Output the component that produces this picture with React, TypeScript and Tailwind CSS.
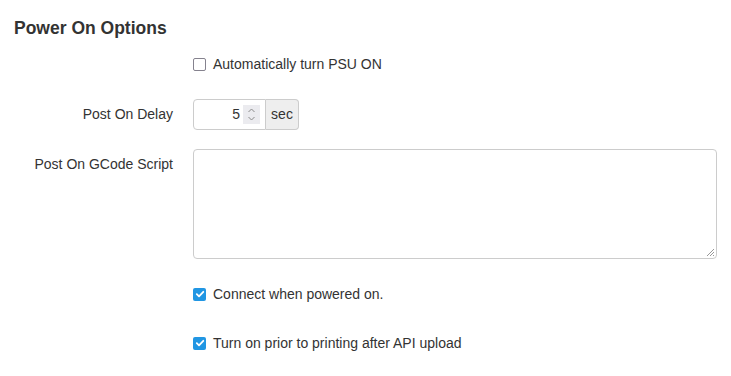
import React from "react";

function Check({ checked }: { checked: boolean }) {
  if (checked) {
    return (
      <span className="flex h-[13px] w-[13px] shrink-0 items-center justify-center rounded-[2px] bg-[#2196e3]">
        <svg width="10" height="10" viewBox="0 0 10 10">
          <path d="M1.8 5.2 L4 7.3 L8.3 2.8" fill="none" stroke="#fff" strokeWidth="1.8" strokeLinecap="round" strokeLinejoin="round" />
        </svg>
      </span>
    );
  }
  return <span className="h-[13px] w-[13px] shrink-0 rounded-[2px] border-[1.5px] border-[#85828e] bg-white" />;
}

export default function App() {
  return (
    <div
      className="min-h-[376px] w-[731px] bg-white text-[14px] text-[#333]"
      style={{ fontFamily: '"Liberation Sans", Arial, sans-serif' }}
    >
      <h3 className="pl-[14px] pt-[16px] text-[17.5px] font-bold leading-[24px] text-[#333]">Power On Options</h3>

      <div className="mt-[16px] flex items-center gap-[7px] pl-[193px]">
        <Check checked={false} />
        <span className="leading-[16px]">Automatically turn PSU ON</span>
      </div>

      <div className="mt-[27px] flex items-center">
        <div className="w-[173px] text-right">Post On Delay</div>
        <div className="ml-[20px] flex h-[31px]">
          <div className="relative flex w-[73px] items-center justify-end rounded-l-[4px] border border-[#ccc] bg-white pr-[25px]">
            <span>5</span>
            <span className="absolute right-[5px] top-[5px] flex h-[19px] w-[17px] flex-col items-center justify-center bg-[#ebebef]">
              <svg width="9" height="15" viewBox="0 0 9 15">
                <path d="M1.5 5 L4.5 2 L7.5 5" fill="none" stroke="#8a8a8a" strokeWidth="1" />
                <path d="M1.5 10 L4.5 13 L7.5 10" fill="none" stroke="#8a8a8a" strokeWidth="1" />
              </svg>
            </span>
          </div>
          <div className="flex w-[33px] items-center justify-center rounded-r-[4px] border border-l-0 border-[#ccc] bg-[#eee]">
            sec
          </div>
        </div>
      </div>

      <div className="mt-[19px] flex items-start">
        <div className="w-[173px] pt-[5px] text-right">Post On GCode Script</div>
        <div className="relative ml-[20px] h-[110px] w-[524px] rounded-[4px] border border-[#ccc] bg-white">
          <svg className="absolute bottom-[1px] right-[1px]" width="10" height="10" viewBox="0 0 10 10">
            <path d="M9 2 L2 9 M9 5 L5 9 M9 8 L8 9" stroke="#999" strokeWidth="1" />
          </svg>
        </div>
      </div>

      <div className="mt-[27px] flex items-center gap-[7px] pl-[193px]">
        <Check checked={true} />
        <span className="leading-[16px]">Connect when powered on.</span>
      </div>

      <div className="mt-[33px] flex items-center gap-[7px] pl-[193px]">
        <Check checked={true} />
        <span className="leading-[16px]">Turn on prior to printing after API upload</span>
      </div>
    </div>
  );
}
